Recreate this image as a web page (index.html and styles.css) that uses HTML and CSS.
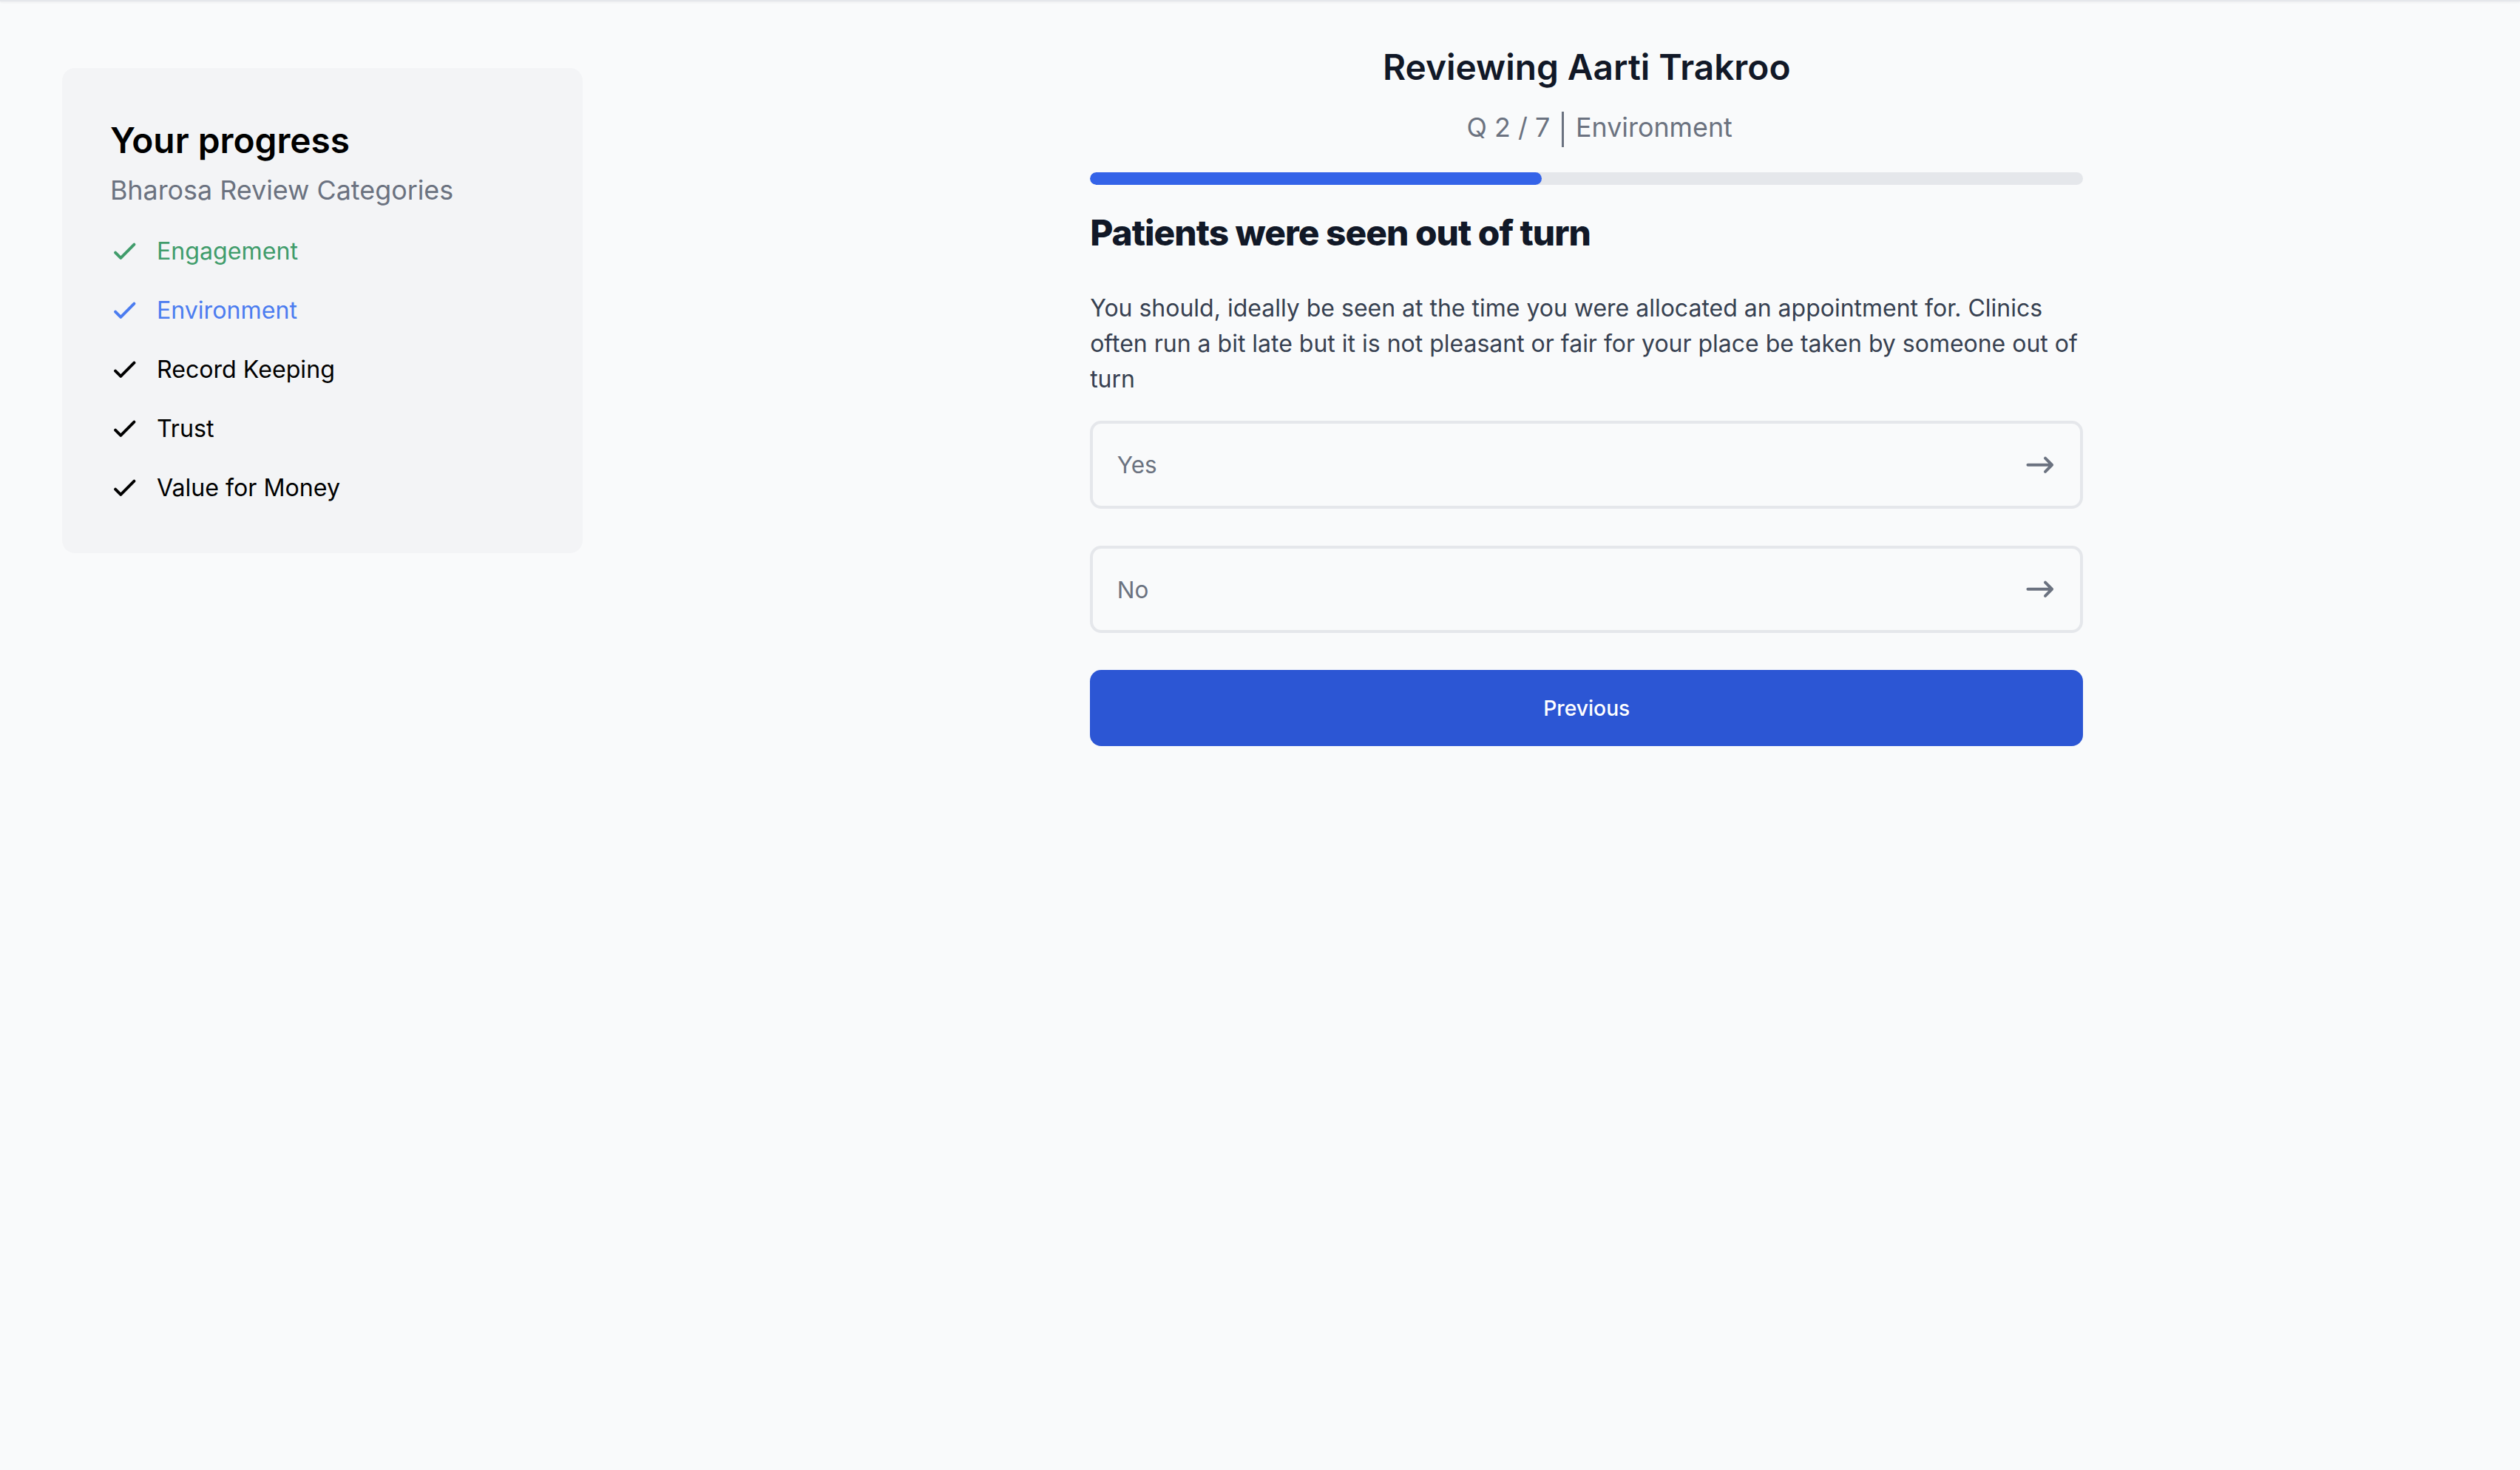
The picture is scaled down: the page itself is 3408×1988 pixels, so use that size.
FILE: index.html
```html
<!DOCTYPE html>
<html lang="en">
<head>
<meta charset="utf-8">
<title>Reviewing Aarti Trakroo</title>
<link rel="stylesheet" href="styles.css">
</head>
<body>
<div class="topbar"></div>
<div class="page">
  <aside class="progress-card">
    <h2 class="progress-title">Your progress</h2>
    <p class="progress-sub">Bharosa Review Categories</p>
    <ul class="cat-list">
      <li class="cat cat-done">
        <svg class="cat-icon" viewBox="0 0 24 24" fill="none" stroke="currentColor" stroke-width="2.2" stroke-linecap="round" stroke-linejoin="round"><path d="M5 13l4 4L19 7"/></svg>
        <span>Engagement</span>
      </li>
      <li class="cat cat-current">
        <svg class="cat-icon" viewBox="0 0 24 24" fill="none" stroke="currentColor" stroke-width="2.2" stroke-linecap="round" stroke-linejoin="round"><path d="M5 13l4 4L19 7"/></svg>
        <span>Environment</span>
      </li>
      <li class="cat">
        <svg class="cat-icon" viewBox="0 0 24 24" fill="none" stroke="currentColor" stroke-width="2.2" stroke-linecap="round" stroke-linejoin="round"><path d="M5 13l4 4L19 7"/></svg>
        <span>Record Keeping</span>
      </li>
      <li class="cat">
        <svg class="cat-icon" viewBox="0 0 24 24" fill="none" stroke="currentColor" stroke-width="2.2" stroke-linecap="round" stroke-linejoin="round"><path d="M5 13l4 4L19 7"/></svg>
        <span>Trust</span>
      </li>
      <li class="cat">
        <svg class="cat-icon" viewBox="0 0 24 24" fill="none" stroke="currentColor" stroke-width="2.2" stroke-linecap="round" stroke-linejoin="round"><path d="M5 13l4 4L19 7"/></svg>
        <span>Value for Money</span>
      </li>
    </ul>
  </aside>

  <main class="main">
    <div class="review">
      <h1 class="review-title">Reviewing Aarti Trakroo</h1>
      <div class="review-meta">
        <span>Q 2 / 7</span>
        <span class="meta-divider"></span>
        <span>Environment</span>
      </div>
      <div class="bar"><div class="bar-fill" style="width: 45.5%"></div></div>
      <h2 class="question">Patients were seen out of turn</h2>
      <p class="question-desc">You should, ideally be seen at the time you were allocated an appointment for. Clinics often run a bit late but it is not pleasant or fair for your place be taken by someone out of turn</p>
      <div class="options">
        <button class="option" type="button">
          <span>Yes</span>
          <svg class="option-arrow" viewBox="0 0 24 24" fill="none" stroke="currentColor" stroke-width="2.2" stroke-linecap="round" stroke-linejoin="round"><path d="M3 12h18M16 7l5 5-5 5"/></svg>
        </button>
        <button class="option" type="button">
          <span>No</span>
          <svg class="option-arrow" viewBox="0 0 24 24" fill="none" stroke="currentColor" stroke-width="2.2" stroke-linecap="round" stroke-linejoin="round"><path d="M3 12h18M16 7l5 5-5 5"/></svg>
        </button>
        <button class="prev" type="button">Previous</button>
      </div>
    </div>
  </main>
</div>
</body>
</html>
```

FILE: styles.css
```css
html {
  zoom: 2.1735;
  background: #f9fafb;
}

* {
  box-sizing: border-box;
}

body {
  margin: 0;
  background: #f9fafb;
  font-family: Inter, "Noto Sans", "Liberation Sans", sans-serif;
  color: #111827;
}

.topbar {
  height: 1px;
  background: #e5e7eb;
  box-shadow: 0 0.5px 1.5px rgba(0, 0, 0, 0.08);
}

.page {
  display: flex;
  align-items: flex-start;
  padding-left: 38.5px;
}

.progress-card {
  width: 324px;
  flex: none;
  margin-top: 41.5px;
  background: #f3f4f6;
  border-radius: 8px;
  padding: 31px 30px 28.5px;
}

.progress-title {
  margin: 0;
  font-size: 22px;
  line-height: 28px;
  font-weight: 600;
  color: #000;
}

.progress-sub {
  margin: 5px 0 0;
  font-size: 16.5px;
  line-height: 24px;
  color: #6b7280;
}

.cat-list {
  list-style: none;
  margin: 14px 0 0;
  padding: 0;
  display: flex;
  flex-direction: column;
  gap: 12.8px;
}

.cat {
  display: flex;
  align-items: center;
  gap: 10px;
  font-size: 14.8px;
  line-height: 24px;
  color: #000;
}

.cat-icon {
  width: 20px;
  height: 20px;
  flex: none;
  margin-left: -1px;
}

.cat-done {
  color: #409c6b;
}

.cat-current {
  color: #4b7cf0;
}

.main {
  flex: 1;
  padding-left: 44px;
  display: flex;
  justify-content: center;
}

.review {
  width: 618px;
  padding-top: 27px;
}

.review-title {
  margin: 0;
  text-align: center;
  font-size: 22px;
  line-height: 28px;
  font-weight: 600;
  color: #111827;
}

.review-meta {
  margin-top: 11px;
  height: 24px;
  padding-left: 16px;
  display: flex;
  justify-content: center;
  align-items: center;
  gap: 7.5px;
  font-size: 16.5px;
  line-height: 24px;
  color: #6b7280;
}

.meta-divider {
  width: 1px;
  height: 22px;
  margin-top: 3px;
  background: #6b7280;
}

.bar {
  margin-top: 16px;
  height: 8px;
  border-radius: 9999px;
  background: #e5e7eb;
  overflow: hidden;
}

.bar-fill {
  height: 100%;
  border-radius: 9999px;
  background: #3463e8;
}

.question {
  margin: 16px 0 0;
  font-size: 22px;
  line-height: 28px;
  font-weight: 800;
  letter-spacing: -0.02em;
  color: #111827;
}

.question-desc {
  margin: 22px 0 0;
  font-size: 14.72px;
  line-height: 22px;
  color: #374151;
}

.options {
  margin-top: 15px;
  display: flex;
  flex-direction: column;
  gap: 23px;
}

.option {
  display: flex;
  align-items: center;
  justify-content: space-between;
  height: 54.5px;
  padding: 0 15px;
  background: #f9fafb;
  border: 2px solid #e5e7eb;
  border-radius: 7px;
  font-family: inherit;
  font-size: 14.5px;
  color: #6b7280;
  text-align: left;
  cursor: pointer;
}

.option-arrow {
  width: 20px;
  height: 20px;
  flex: none;
}

.prev {
  height: 47.5px;
  border: 0;
  border-radius: 7px;
  background: #2c56d4;
  color: #fff;
  font-family: inherit;
  font-size: 13px;
  font-weight: 500;
  cursor: pointer;
}
```
